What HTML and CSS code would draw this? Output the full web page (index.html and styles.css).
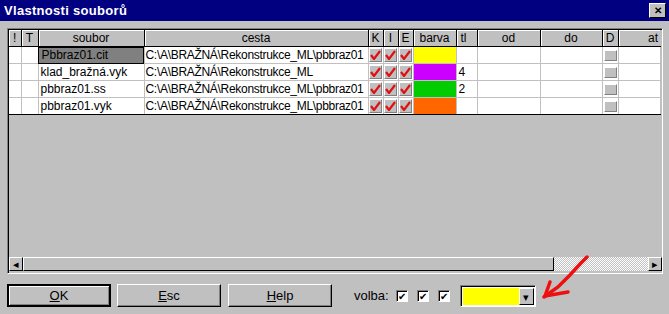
FILE: index.html
```html
<!DOCTYPE html>
<html>
<head>
<meta charset="utf-8" />
<title>Vlastnosti souborů</title>
<link rel="stylesheet" href="styles.css">
</head>
<body>

<div class="window">
  <div class="titlebar">
    <span class="title">Vlastnosti souborů</span>
    <span class="close">&#x2715;</span>
  </div>

  <div class="client">
    <div class="grid">
      <table class="files">
        <colgroup>
          <col style="width:12px"><col style="width:17px"><col style="width:106px"><col style="width:224px">
          <col style="width:15px"><col style="width:15px"><col style="width:15px"><col style="width:43px">
          <col style="width:21px"><col style="width:63px"><col style="width:62px"><col style="width:16px">
          <col style="width:42px">
        </colgroup>
        <thead>
          <tr>
            <th>!</th><th>T</th><th>soubor</th><th>cesta</th>
            <th>K</th><th>I</th><th>E</th><th>barva</th>
            <th class="left">tl</th><th>od</th><th>do</th><th>D</th><th class="right">at</th>
          </tr>
        </thead>
        <tbody>
          <tr>
            <td></td><td></td><td class="sel">Pbbraz01.cit</td><td class="path">C:\A\BRAŽNÁ\Rekonstrukce_ML\pbbraz01</td>
            <td class="chk"><span class="tick"><svg width="11" height="10" viewBox="0 0 11 10"><path d="M1 5 L4 9 L10 1" stroke="#e01010" stroke-width="2.2" fill="none"/></svg></span></td>
            <td class="chk"><span class="tick"><svg width="11" height="10" viewBox="0 0 11 10"><path d="M1 5 L4 9 L10 1" stroke="#e01010" stroke-width="2.2" fill="none"/></svg></span></td>
            <td class="chk"><span class="tick"><svg width="11" height="10" viewBox="0 0 11 10"><path d="M1 5 L4 9 L10 1" stroke="#e01010" stroke-width="2.2" fill="none"/></svg></span></td>
            <td class="swatch yellow"></td><td></td><td></td><td></td><td class="dcell"><span class="dbox"></span></td><td></td>
          </tr>
          <tr>
            <td></td><td></td><td>klad_bražná.vyk</td><td class="path">C:\A\BRAŽNÁ\Rekonstrukce_ML</td>
            <td class="chk"><span class="tick"><svg width="11" height="10" viewBox="0 0 11 10"><path d="M1 5 L4 9 L10 1" stroke="#e01010" stroke-width="2.2" fill="none"/></svg></span></td>
            <td class="chk"><span class="tick"><svg width="11" height="10" viewBox="0 0 11 10"><path d="M1 5 L4 9 L10 1" stroke="#e01010" stroke-width="2.2" fill="none"/></svg></span></td>
            <td class="chk"><span class="tick"><svg width="11" height="10" viewBox="0 0 11 10"><path d="M1 5 L4 9 L10 1" stroke="#e01010" stroke-width="2.2" fill="none"/></svg></span></td>
            <td class="swatch purple"></td><td>4</td><td></td><td></td><td class="dcell"><span class="dbox"></span></td><td></td>
          </tr>
          <tr>
            <td></td><td></td><td>pbbraz01.ss</td><td class="path">C:\A\BRAŽNÁ\Rekonstrukce_ML\pbbraz01</td>
            <td class="chk"><span class="tick"><svg width="11" height="10" viewBox="0 0 11 10"><path d="M1 5 L4 9 L10 1" stroke="#e01010" stroke-width="2.2" fill="none"/></svg></span></td>
            <td class="chk"><span class="tick"><svg width="11" height="10" viewBox="0 0 11 10"><path d="M1 5 L4 9 L10 1" stroke="#e01010" stroke-width="2.2" fill="none"/></svg></span></td>
            <td class="chk"><span class="tick"><svg width="11" height="10" viewBox="0 0 11 10"><path d="M1 5 L4 9 L10 1" stroke="#e01010" stroke-width="2.2" fill="none"/></svg></span></td>
            <td class="swatch green"></td><td>2</td><td></td><td></td><td class="dcell"><span class="dbox"></span></td><td></td>
          </tr>
          <tr>
            <td></td><td></td><td>pbbraz01.vyk</td><td class="path">C:\A\BRAŽNÁ\Rekonstrukce_ML\pbbraz01</td>
            <td class="chk"><span class="tick"><svg width="11" height="10" viewBox="0 0 11 10"><path d="M1 5 L4 9 L10 1" stroke="#e01010" stroke-width="2.2" fill="none"/></svg></span></td>
            <td class="chk"><span class="tick"><svg width="11" height="10" viewBox="0 0 11 10"><path d="M1 5 L4 9 L10 1" stroke="#e01010" stroke-width="2.2" fill="none"/></svg></span></td>
            <td class="chk"><span class="tick"><svg width="11" height="10" viewBox="0 0 11 10"><path d="M1 5 L4 9 L10 1" stroke="#e01010" stroke-width="2.2" fill="none"/></svg></span></td>
            <td class="swatch orange"></td><td></td><td></td><td></td><td class="dcell"><span class="dbox"></span></td><td></td>
          </tr>
        </tbody>
      </table>

      <div class="hscroll">
        <span class="arrow-btn">&#x25C2;</span>
        <span class="thumb"></span>
        <span class="track"></span>
        <span class="arrow-btn">&#x25B8;</span>
      </div>
    </div>

    <div class="buttons">
      <button class="btn default"><u>O</u>K</button>
      <button class="btn"><u>E</u>sc</button>
      <button class="btn"><u>H</u>elp</button>
      <span class="volba">volba:</span>
      <span class="cb">&#x2714;</span>
      <span class="cb">&#x2714;</span>
      <span class="cb">&#x2714;</span>
      <span class="combo">
        <span class="combo-color"></span>
        <span class="combo-btn">&#x25BE;</span>
      </span>
    </div>
  </div>

  <svg class="pointer" width="60" height="50" viewBox="0 0 60 50">
    <path d="M47 2 L41 8 L30 20 L18 32 L4 42" stroke="#ee1010" stroke-width="3.5" fill="none" stroke-linecap="round"/>
    <path d="M10 27 L5 41 L28 37" stroke="#ee1010" stroke-width="3.5" fill="none" stroke-linecap="round" stroke-linejoin="round"/>
  </svg>
</div>

</body>
</html>
```

FILE: styles.css
```css
html, body {
  margin: 0;
  padding: 0;
}
body {
  background: #c0c0c0;
  font-family: "Liberation Sans", Arial, sans-serif;
  font-size: 12px;
  color: #000;
}
.window {
  position: relative;
  width: 669px;
  height: 314px;
  overflow: hidden;
}
.titlebar {
  height: 21px;
  background: #000080;
  display: flex;
  align-items: center;
  justify-content: space-between;
  padding: 0 3px 0 4px;
  box-sizing: border-box;
}
.title {
  color: #fff;
  font-weight: bold;
  font-size: 13px;
  letter-spacing: 0.3px;
}
.close {
  width: 15px;
  height: 13px;
  background: #c0c0c0;
  border: 1px solid;
  border-color: #fff #000 #000 #fff;
  font-size: 10px;
  font-weight: bold;
  line-height: 13px;
  text-align: center;
}
.client {
  padding: 7px 7px 0 7px;
}
.grid {
  width: 653px;
  height: 243px;
  border: 1px solid;
  border-color: #808080 #fff #fff #808080;
  box-shadow: inset 1px 1px 0 #000;
  display: flex;
  flex-direction: column;
  justify-content: space-between;
  padding: 1px 0 0 1px;
  box-sizing: content-box;
}
.files {
  border-collapse: collapse;
  table-layout: fixed;
  width: 651px;
}
.files th {
  height: 16px;
  padding: 0;
  background: #c0c0c0;
  font-weight: normal;
  font-size: 12px;
  border-right: 1px solid #000;
  border-bottom: 1px solid #000;
  box-shadow: inset 1px 1px 0 #fff;
  text-align: center;
  white-space: nowrap;
  overflow: hidden;
}
.files th.left {
  text-align: left;
  padding-left: 4px;
}
.files th.right {
  text-align: right;
  padding-right: 2px;
  border-right: none;
}
.files td {
  height: 16px;
  padding: 0 0 0 2px;
  background: #fff;
  border-right: 1px solid #c0c0c0;
  border-bottom: 1px solid #c0c0c0;
  white-space: nowrap;
  overflow: hidden;
  font-size: 12px;
}
.files td.path {
  letter-spacing: -0.3px;
  padding-left: 1px;
}
.files tbody tr:last-child td {
  border-bottom: 1px solid #000;
}
.files td.sel {
  background: #808080;
  outline: 1px solid #000;
  outline-offset: -1px;
  padding-left: 3px;
}
.files td.chk,
.files td.dcell {
  background: #fff;
  padding: 0;
  text-align: center;
}
.tick {
  display: inline-flex;
  align-items: center;
  justify-content: center;
  width: 13px;
  height: 14px;
  background: #c0c0c0;
  border: 1px solid;
  border-color: #fff #808080 #808080 #fff;
  box-sizing: border-box;
  vertical-align: middle;
}
.dbox {
  display: inline-block;
  width: 13px;
  height: 11px;
  background: #c0c0c0;
  border: 1px solid;
  border-color: #fff #808080 #808080 #fff;
  box-sizing: border-box;
  vertical-align: middle;
}
.files td.swatch {
  padding: 0;
}
.yellow { background: #ffff00 !important; }
.purple { background: #cc00ff !important; }
.green { background: #00cc00 !important; }
.orange { background: #ff6600 !important; }

.hscroll {
  display: flex;
  height: 15px;
  margin-bottom: 1px;
}
.arrow-btn {
  width: 14px;
  height: 14px;
  background: #c0c0c0;
  border: 1px solid;
  border-color: #fff #000 #000 #fff;
  box-sizing: border-box;
  font-size: 11px;
  line-height: 12px;
  text-align: center;
}
.thumb {
  width: 531px;
  height: 14px;
  background: #c0c0c0;
  border: 1px solid;
  border-color: #fff #000 #000 #fff;
  box-sizing: border-box;
}
.track {
  flex: 1;
  height: 14px;
  background-color: #c0c0c0;
  background-image: repeating-conic-gradient(#fff 0 25%, #c0c0c0 0 50%);
  background-size: 2px 2px;
}

.buttons {
  display: flex;
  align-items: center;
  margin-top: 10px;
  height: 23px;
}
.btn {
  width: 104px;
  height: 23px;
  margin-right: 7px;
  background: #c0c0c0;
  border: 1px solid;
  border-color: #fff #000 #000 #fff;
  box-shadow: inset -1px -1px 0 #808080;
  font-family: "Liberation Sans", Arial, sans-serif;
  font-size: 13px;
  padding: 0;
}
.btn.default {
  border: 2px solid #000;
  box-shadow: inset 1px 1px 0 #fff, inset -1px -1px 0 #808080;
  margin-right: 6px;
}
.volba {
  margin-left: 15px;
  margin-right: 7px;
  font-size: 13px;
}
.cb {
  width: 12px;
  height: 12px;
  background: #fff;
  border: 1px solid;
  border-color: #808080 #fff #fff #808080;
  box-shadow: inset 1px 1px 0 #000;
  box-sizing: border-box;
  font-size: 10px;
  line-height: 11px;
  text-align: center;
  margin-right: 9px;
}
.combo {
  display: flex;
  width: 76px;
  height: 22px;
  margin-left: 1px;
  border: 1px solid;
  border-color: #808080 #fff #fff #808080;
  box-shadow: inset 1px 1px 0 #000;
  box-sizing: border-box;
  padding: 2px 1px 1px 2px;
  background: #fff;
}
.combo-color {
  flex: 1;
  background: #ffff00;
}
.combo-btn {
  width: 15px;
  background: #c0c0c0;
  border: 1px solid;
  border-color: #fff #000 #000 #fff;
  box-sizing: border-box;
  font-size: 11px;
  text-align: center;
  line-height: 16px;
}
.pointer {
  position: absolute;
  left: 540px;
  top: 255px;
}
```
